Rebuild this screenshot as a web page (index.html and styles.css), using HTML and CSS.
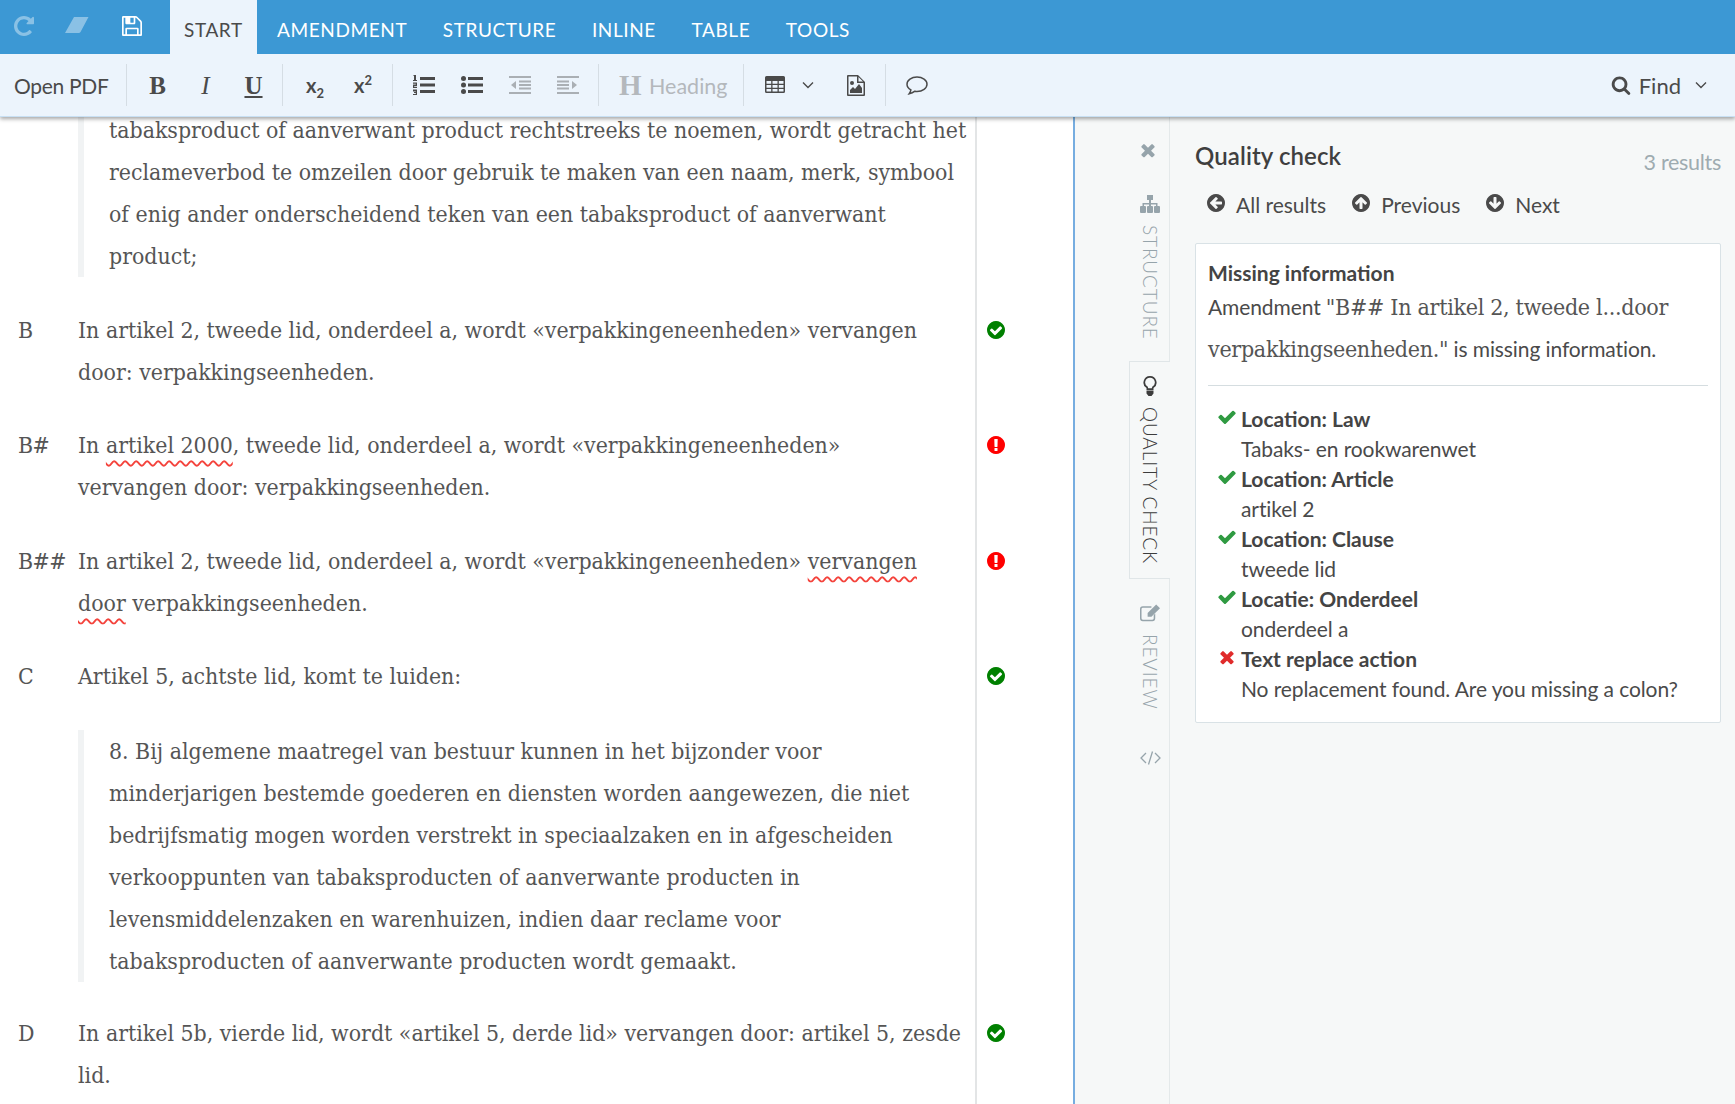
FILE: index.html
```html
<!DOCTYPE html>
<html>
<head>
    <meta name="viewport" content="width=device-width, initial-scale=1.0">
    <title>Amendment editor</title>
    <link rel="stylesheet" href="styles.css">
</head>
<body>
    <svg class="defs" width="0" height="0">
        <symbol id="i-check" viewBox="0 0 1792 1792"><path d="M1671 566q0 40-28 68l-724 724-136 136q-28 28-68 28t-68-28l-136-136-362-362q-28-28-28-68t28-68l136-136q28-28 68-28t68 28l294 295 656-657q28-28 68-28t68 28l136 136q28 28 28 68z"/></symbol>
        <symbol id="i-times" viewBox="0 0 1792 1792"><path d="M1490 1322q0 40-28 68l-136 136q-28 28-68 28t-68-28l-294-294-294 294q-28 28-68 28t-68-28l-136-136q-28-28-28-68t28-68l294-294-294-294q-28-28-28-68t28-68l136-136q28-28 68-28t68 28l294 294 294-294q28-28 68-28t68 28l136 136q28 28 28 68t-28 68l-294 294 294 294q28 28 28 68z"/></symbol>
        <symbol id="i-ok" viewBox="128 128 1536 1536"><path d="M1412 734q0-28-18-46l-91-90q-19-19-45-19t-45 19l-408 407-226-226q-19-19-45-19t-45 19l-91 90q-18 18-18 46 0 27 18 45l362 362q19 19 45 19 27 0 46-19l543-543q18-18 18-45zm252 162q0 209-103 385.5t-279.5 279.5-385.5 103-385.5-103-279.5-279.5-103-385.5 103-385.5 279.5-279.5 385.5-103 385.5 103 279.5 279.5 103 385.5z"/></symbol>
        <symbol id="i-error" viewBox="128 128 1536 1536"><path d="M896 128q209 0 385.5 103t279.5 279.5 103 385.5-103 385.5-279.5 279.5-385.5 103-385.5-103-279.5-279.5-103-385.5 103-385.5 279.5-279.5 385.5-103zm128 1247v-190q0-14-9-23.5t-22-9.5h-192q-13 0-23 10t-10 23v190q0 13 10 23t23 10h192q13 0 22-9.5t9-23.5zm-2-344l18-621q0-12-10-18-10-8-24-8h-220q-14 0-24 8-10 6-10 18l17 621q0 10 10 17.5t24 7.5h185q14 0 23.5-7.5t10.5-17.5z"/></symbol>
        <symbol id="i-search" viewBox="0 0 1792 1792"><path d="M1216 832q0-185-131.5-316.5t-316.5-131.5-316.5 131.5-131.5 316.5 131.5 316.5 316.5 131.5 316.5-131.5 131.5-316.5zm512 832q0 52-38 90t-90 38q-54 0-90-38l-343-342q-179 124-399 124-143 0-273.5-55.5t-225-150-150-225-55.5-273.5 55.5-273.5 150-225 225-150 273.5-55.5 273.5 55.5 225 150 150 225 55.5 273.5q0 220-124 399l343 343q37 37 37 90z"/></symbol>
        <symbol id="i-left" viewBox="128 128 1536 1536"><path d="M1408 960v-128q0-26-19-45t-45-19h-502l189-189q19-19 19-45t-19-45l-91-91q-18-18-45-18t-45 18l-362 362-91 91q-18 18-18 45t18 45l91 91 362 362q18 18 45 18t45-18l91-91q18-18 18-45t-18-45l-189-189h502q26 0 45-19t19-45zm256-64q0 209-103 385.5t-279.5 279.5-385.5 103-385.5-103-279.5-279.5-103-385.5 103-385.5 279.5-279.5 385.5-103 385.5 103 279.5 279.5 103 385.5z"/></symbol>
        <symbol id="i-save" viewBox="128 128 1536 1536"><path d="M512 1536h768v-384h-768v384zm896 0h128v-896q0-14-10-38.5t-20-34.5l-281-281q-10-10-34-20t-39-10v416q0 40-28 68t-68 28h-576q-40 0-68-28t-28-68v-416h-128v1280h128v-416q0-40 28-68t68-28h832q40 0 68 28t28 68v416zm-384-928v-320q0-13-9.5-22.5t-22.5-9.5h-192q-13 0-22.5 9.5t-9.5 22.5v320q0 13 9.5 22.5t22.5 9.5h192q13 0 22.5-9.5t9.5-22.5zm640 32v928q0 40-28 68t-68 28h-1344q-40 0-68-28t-28-68v-1344q0-40 28-68t68-28h928q40 0 88 20t76 48l280 280q28 28 48 76t20 88z"/></symbol>
        <symbol id="i-repeat" viewBox="128 128 1536 1536"><path d="M1664 256v448q0 26-19 45t-45 19h-448q-42 0-59-40-17-39 14-69l138-138q-148-137-349-137-104 0-198.5 40.5t-163.5 109.5-109.5 163.5-40.5 198.5 40.5 198.5 109.5 163.5 163.5 109.5 198.5 40.5q119 0 225-52t179-147q7-10 23-12 15 0 25 9l137 138q9 8 9.5 20.5t-7.5 22.5q-109 132-264 204.5t-327 72.5q-156 0-298-61t-245-164-164-245-61-298 61-298 164-245 245-164 298-61q147 0 284.5 55.5t244.5 156.5l130-129q29-31 70-14 39 17 39 59z"/></symbol>
        <symbol id="i-chevron" viewBox="0 0 12 8"><path d="M1 1.5l5 5 5-5" fill="none" stroke="currentColor" stroke-width="1.4"/></symbol>
    </svg>

    <div class="app">
        <header class="ribbon">
            <div class="tabbar">
                <div class="quick">
                    <svg class="ic ic-quick faded"><use href="#i-repeat"></use></svg>
                    <svg class="ic ic-eraser faded" viewBox="0 0 24 18"><path d="M9 0h14.500L15.500 15a2 2 0 0 1-1.800 1H0z"/></svg>
                    <svg class="ic ic-quick"><use href="#i-save"></use></svg>
                </div>
                <nav class="tabs">
                    <a class="tab active">START</a>
                    <a class="tab">AMENDMENT</a>
                    <a class="tab">STRUCTURE</a>
                    <a class="tab">INLINE</a>
                    <a class="tab">TABLE</a>
                    <a class="tab">TOOLS</a>
                </nav>
            </div>
            <div class="toolbar">
                <div class="group group-pdf"><span class="tool-text">Open PDF</span></div>
                <div class="group group-format">
                    <span class="glyph bold">B</span>
                    <span class="glyph italic">I</span>
                    <span class="glyph under">U</span>
                </div>
                <div class="group group-script">
                    <span class="script">x<sub>2</sub></span>
                    <span class="script">x<sup>2</sup></span>
                </div>
                <div class="group group-list">
                    <svg class="ic ic-tool" viewBox="0 0 22 20"><path d="M7 2h15v3H7zM7 8.500h15v3H7zM7 15h15v3H7z"/><path d="M1 0h2v5h1v1H0V5h1V1H0zM0 7.500h4v3.500H1.200v.8H4V13H0V9.500h2.800v-.8H0zM0 14.500h4V20H0v-1h2.800v-.9H1v-1h1.800v-.6H0z"/></svg>
                    <svg class="ic ic-tool" viewBox="0 0 22 20"><circle cx="2.500" cy="3.500" r="2.500"/><circle cx="2.500" cy="10" r="2.500"/><circle cx="2.500" cy="16.500" r="2.500"/><path d="M7 2h15v3H7zM7 8.500h15v3H7zM7 15h15v3H7z"/></svg>
                    <svg class="ic ic-tool faded-dark" viewBox="0 0 22 20"><path d="M0 1h22v2H0zM10 5.500h12v2H10zM10 9h12v2H10zM10 12.500h12v2H10zM0 17h22v2H0zM7 6v8l-5-4z"/></svg>
                    <svg class="ic ic-tool faded-dark" viewBox="0 0 22 20"><path d="M0 1h22v2H0zM0 5.500h12v2H0zM0 9h12v2H0zM0 12.500h12v2H0zM0 17h22v2H0zM15 6v8l5-4z"/></svg>
                </div>
                <div class="group group-heading">
                    <span class="glyph bold heading-h">H</span>
                    <span class="tool-text muted">Heading</span>
                </div>
                <div class="group group-insert">
                    <svg class="ic ic-table" viewBox="0 0 20 17"><path fill-rule="evenodd" d="M1.500 0h17A1.500 1.500 0 0 1 20 1.500v14a1.500 1.500 0 0 1-1.500 1.500h-17A1.500 1.500 0 0 1 0 15.500v-14A1.500 1.500 0 0 1 1.500 0zM1.500 5v2.700h4.700V5zm6 0v2.700h5V5zm6.300 0v2.700h4.700V5zM1.500 9v2.700h4.700V9zm6 0v2.700h5V9zm6.300 0v2.700h4.700V9zM1.500 13v2.500h4.700V13zm6 0v2.500h5V13zm6.300 0v2.500h4.700V13z"/></svg>
                    <svg class="ic ic-chevron"><use href="#i-chevron"></use></svg>
                    <svg class="ic ic-image" viewBox="0 0 18 21"><path fill-rule="evenodd" d="M1 0h10l7 7v13a1 1 0 0 1-1 1H1a1 1 0 0 1-1-1V1a1 1 0 0 1 1-1zm.5 1.500v18h15V8H10V1.500zM11.500 2v4.500H16z"/><circle cx="5" cy="8" r="2"/><path d="M3 18v-3l3-3 2 2 4-5 3 4v5z"/></svg>
                </div>
                <div class="group group-comment">
                    <svg class="ic ic-comment" viewBox="0 0 22 19"><path d="M11 1C5.500 1 1 4.200 1 8.200c0 2.300 1.500 4.400 3.900 5.700-.2 1.400-.8 2.700-1.700 3.900 2.200-.4 4.200-1.400 5.700-2.600.7.100 1.400.2 2.100.2 5.500 0 10-3.200 10-7.200S16.500 1 11 1z" fill="none" stroke="currentColor" stroke-width="1.500"/></svg>
                </div>
                <div class="find">
                    <svg class="ic ic-search"><use href="#i-search"></use></svg>
                    <span class="tool-text">Find</span>
                    <svg class="ic ic-chevron"><use href="#i-chevron"></use></svg>
                </div>
            </div>
        </header>

        <main class="workspace">
            <section class="editor">
                <div class="row row-first">
                    <div class="label"></div>
                    <div class="body">
                        <blockquote class="quote">tabaksproduct of aanverwant product rechtstreeks te noemen, wordt getracht het<br>reclameverbod te omzeilen door gebruik te maken van een naam, merk, symbool<br>of enig ander onderscheidend teken van een tabaksproduct of aanverwant<br>product;</blockquote>
                    </div>
                    <div class="gutter"></div>
                </div>
                <div class="row">
                    <div class="label">B</div>
                    <div class="body">In artikel 2, tweede lid, onderdeel a, wordt «verpakkingeneenheden» vervangen<br>door: verpakkingseenheden.</div>
                    <div class="gutter"><svg class="ic ic-mark ok"><use href="#i-ok"></use></svg></div>
                </div>
                <div class="row">
                    <div class="label">B#</div>
                    <div class="body">In <span class="wavy">artikel 2000</span>, tweede lid, onderdeel a, wordt «verpakkingeneenheden»<br>vervangen door: verpakkingseenheden.</div>
                    <div class="gutter"><svg class="ic ic-mark bad"><use href="#i-error"></use></svg></div>
                </div>
                <div class="row">
                    <div class="label">B##</div>
                    <div class="body">In artikel 2, tweede lid, onderdeel a, wordt «verpakkingeneenheden» <span class="wavy">vervangen</span><br><span class="wavy">door</span> verpakkingseenheden.</div>
                    <div class="gutter"><svg class="ic ic-mark bad"><use href="#i-error"></use></svg></div>
                </div>
                <div class="row">
                    <div class="label">C</div>
                    <div class="body">Artikel 5, achtste lid, komt te luiden:</div>
                    <div class="gutter"><svg class="ic ic-mark ok"><use href="#i-ok"></use></svg></div>
                </div>
                <div class="row row-quote">
                    <div class="label"></div>
                    <div class="body">
                        <blockquote class="quote">8. Bij algemene maatregel van bestuur kunnen in het bijzonder voor<br>minderjarigen bestemde goederen en diensten worden aangewezen, die niet<br>bedrijfsmatig mogen worden verstrekt in speciaalzaken en in afgescheiden<br>verkooppunten van tabaksproducten of aanverwante producten in<br>levensmiddelenzaken en warenhuizen, indien daar reclame voor<br>tabaksproducten of aanverwante producten wordt gemaakt.</blockquote>
                    </div>
                    <div class="gutter"></div>
                </div>
                <div class="row">
                    <div class="label">D</div>
                    <div class="body">In artikel 5b, vierde lid, wordt «artikel 5, derde lid» vervangen door: artikel 5, zesde<br>lid.</div>
                    <div class="gutter"><svg class="ic ic-mark ok"><use href="#i-ok"></use></svg></div>
                </div>
            </section>

            <aside class="sidebar">
                <div class="rail">
                    <svg class="ic ic-close"><use href="#i-times"></use></svg>
                    <div class="rail-tab">
                        <svg class="ic ic-rail" viewBox="0 0 20 18"><path d="M7 0h6v5h-2v3h6.500v3H19a1 1 0 0 1 1 1v5a1 1 0 0 1-1 1h-4a1 1 0 0 1-1-1v-5a1 1 0 0 1 1-1h1V9.500h-5V11h1a1 1 0 0 1 1 1v5a1 1 0 0 1-1 1H8a1 1 0 0 1-1-1v-5a1 1 0 0 1 1-1h1V9.500H4V11h1a1 1 0 0 1 1 1v5a1 1 0 0 1-1 1H1a1 1 0 0 1-1-1v-5a1 1 0 0 1 1-1h1.500V8H9V5H7z"/></svg>
                        <span class="rail-label">STRUCTURE</span>
                    </div>
                    <div class="rail-tab active">
                        <svg class="ic ic-rail" viewBox="-1 0 16 20"><path d="M7 0a6.500 6.500 0 0 1 3.500 12V14h-7v-2A6.500 6.500 0 0 1 7 0zm0 1.800a4.700 4.700 0 0 0-2.200 8.900l.4 1.500h3.600l.4-1.500A4.700 4.700 0 0 0 7 1.800zM3.500 14.500h7v3L8.500 20h-3l-2-2.500z"/></svg>
                        <span class="rail-label">QUALITY CHECK</span>
                    </div>
                    <div class="rail-tab">
                        <svg class="ic ic-rail" viewBox="0 0 21 18"><path d="M3 2h9v1.600H3a1.400 1.400 0 0 0-1.400 1.400v9.600A1.400 1.400 0 0 0 3 16h10a1.400 1.400 0 0 0 1.400-1.400V11L16 9.400v5.200a3 3 0 0 1-3 3H3a3 3 0 0 1-3-3V5a3 3 0 0 1 3-3z"/><path d="M17 0l4 4-9 9H8V9z"/></svg>
                        <span class="rail-label">REVIEW</span>
                    </div>
                    <svg class="ic ic-code" viewBox="0 0 21 14"><path d="M6 2L1 7l5 5M15 2l5 5-5 5M12.500 0.500l-4 13" fill="none" stroke="currentColor" stroke-width="1.300"/></svg>
                </div>

                <div class="panel">
                    <div class="panel-head">
                        <h2>Quality check</h2>
                        <span class="count">3 results</span>
                    </div>
                    <div class="panel-nav">
                        <a><svg class="ic ic-nav"><use href="#i-left"></use></svg>All results</a>
                        <a><svg class="ic ic-nav up"><use href="#i-left"></use></svg>Previous</a>
                        <a><svg class="ic ic-nav down"><use href="#i-left"></use></svg>Next</a>
                    </div>
                    <div class="card">
                        <h3>Missing information</h3>
                        <p class="summary">Amendment <span class="serif">"B## In artikel 2, tweede l...door<br>verpakkingseenheden."</span> is missing information.</p>
                        <ul class="checks">
                            <li><svg class="ic ic-check pass"><use href="#i-check"></use></svg><b>Location: Law</b><span>Tabaks- en rookwarenwet</span></li>
                            <li><svg class="ic ic-check pass"><use href="#i-check"></use></svg><b>Location: Article</b><span>artikel 2</span></li>
                            <li><svg class="ic ic-check pass"><use href="#i-check"></use></svg><b>Location: Clause</b><span>tweede lid</span></li>
                            <li><svg class="ic ic-check pass"><use href="#i-check"></use></svg><b>Locatie: Onderdeel</b><span>onderdeel a</span></li>
                            <li><svg class="ic ic-check fail"><use href="#i-times"></use></svg><b>Text replace action</b><span>No replacement found. Are you missing a colon?</span></li>
                        </ul>
                    </div>
                </div>
            </aside>
        </main>
    </div>
</body>
</html>
```
FILE: styles.css
```css
html, body {
    height: 100%;
    margin: 0;
}
body {
    font-family: Lato, "Open Sans", sans-serif;
    color: #4a4a4a;
    background: #fff;
    overflow: hidden;
}
.defs {
    display: block;
    height: 0;
}
.app {
    height: 100vh;
    display: flex;
    flex-direction: column;
    overflow: hidden;
}
.ic {
    display: block;
    fill: currentColor;
    flex: none;
}

/* ribbon */
.ribbon {
    position: relative;
    z-index: 2;
    flex: none;
    box-shadow: 0 2px 4px rgba(0, 0, 0, 0.35);
}
.tabbar {
    height: 54px;
    background: #3c98d4;
    display: flex;
}
.quick {
    width: 170px;
    display: flex;
    align-items: center;
    color: #fff;
    padding: 0 0 2px 14px;
    box-sizing: border-box;
    gap: 31px;
}
.ic-quick {
    width: 20px;
    height: 20px;
}
.ic-eraser {
    width: 24px;
    height: 18px;
    margin-right: 2px;
}
.faded {
    opacity: 0.4;
}
.tabs {
    display: flex;
}
.tab {
    color: #fff;
    font-size: 19px;
    letter-spacing: 0.6px;
    padding: 4px 17.800px 0;
    display: flex;
    align-items: center;
}
.tab.active {
    background: #ecf4fc;
    color: #4a4a4a;
    padding: 4px 14px 0;
    margin-right: 2.500px;
}
.toolbar {
    height: 63px;
    box-sizing: border-box;
    background: #ecf4fc;
    border-bottom: 1px solid #c8e0f4;
    display: flex;
    align-items: center;
    color: #4a4a4a;
}
.group {
    height: 42px;
    display: flex;
    align-items: center;
    border-right: 1px solid #d5dde4;
    box-sizing: border-box;
}
.tool-text {
    font-size: 22px;
}
.muted {
    color: #b4b8bc;
    font-size: 21.500px;
    padding-top: 1px;
}
.group-pdf {
    width: 127px;
    padding-left: 14px;
}
.group-pdf .tool-text {
    font-size: 21px;
    letter-spacing: -0.3px;
}
.group-format {
    width: 156px;
    padding-left: 20px;
    gap: 27px;
}
.glyph {
    font-family: "Liberation Serif", serif;
    font-size: 25px;
    width: 21px;
    text-align: center;
    line-height: 1;
}
.bold {
    font-weight: bold;
}
.italic {
    font-style: italic;
}
.under {
    text-decoration: underline;
    font-weight: bold;
}
.group-script {
    width: 110px;
    padding-left: 23px;
    gap: 22px;
}
.script {
    font-size: 20px;
    font-weight: bold;
    width: 26px;
    line-height: 1;
}
.script sub, .script sup {
    font-size: 13px;
    line-height: 0;
}
.group-list {
    width: 206px;
    padding-left: 20px;
    gap: 26px;
}
.ic-tool {
    width: 22px;
    height: 20px;
}
.faded-dark {
    opacity: 0.4;
}
.group-heading {
    width: 145px;
    padding-left: 20px;
    gap: 9px;
}
.heading-h {
    color: #b4b8bc;
    font-size: 29px;
}
.group-insert {
    width: 142px;
    padding-left: 21px;
}
.ic-table {
    width: 20px;
    height: 17px;
    margin-top: -2px;
}
.ic-chevron {
    width: 12px;
    height: 8px;
}
.group-insert .ic-chevron {
    margin: 0 0 0 17px;
}
.ic-image {
    width: 18px;
    height: 21px;
    margin-left: 33px;
}
.group-comment {
    border-right: none;
    padding-left: 20px;
}
.ic-comment {
    width: 22px;
    height: 19px;
}
.find {
    margin-left: auto;
    display: flex;
    align-items: center;
    padding-right: 28px;
}
.ic-search {
    width: 20px;
    height: 20px;
    margin-right: 8px;
}
.find .ic-chevron {
    margin-left: 14px;
}

/* document */
.workspace {
    flex: 1;
    min-height: 0;
    display: flex;
}
.editor {
    width: 1073px;
    flex: none;
    border-right: 2px solid #76ade0;
    font-family: "DejaVu Serif Condensed", "DejaVu Serif", serif;
    font-stretch: condensed;
    font-size: 22.850px;
    line-height: 42px;
    color: #555;
}
.row {
    display: grid;
    grid-template-columns: 60px 897px 1fr;
    padding-left: 18px;
}
.row-first {
    margin-top: -8px;
}
.label, .body {
    padding-bottom: 31.500px;
    white-space: nowrap;
}
.label {
    letter-spacing: -0.5px;
}
.row-quote .body {
    padding-bottom: 30px;
}
.quote {
    margin: 0;
    border-left: 6px solid #f1f3f4;
    padding-left: 25px;
}
.row-quote .quote {
    margin-top: 1.500px;
}
.gutter {
    border-left: 2px solid #e3e5e6;
    padding: 12px 0 0 10px;
}
.ic-mark {
    width: 18px;
    height: 18px;
}
.ok {
    color: #008000;
}
.bad {
    color: #f00;
}
.wavy {
    text-decoration: underline wavy #f4433c;
    text-decoration-thickness: 1.500px;
    text-underline-offset: 7px;
}

/* side panel */
.sidebar {
    flex: 1;
    min-width: 0;
    display: flex;
    background: #f6f8f8;
}
.rail {
    width: 95px;
    flex: none;
    box-sizing: border-box;
    border-right: 1px solid #e4e9ea;
    display: flex;
    flex-direction: column;
    align-items: flex-end;
    padding-top: 23px;
    color: #96a4ab;
}
.ic-close {
    width: 20px;
    height: 20px;
    margin-right: 11px;
}
.rail-tab {
    width: 41px;
    box-sizing: border-box;
    display: flex;
    flex-direction: column;
    align-items: center;
    margin-right: -1px;
    border: 1px solid transparent;
    border-right: none;
}
.rail-tab:nth-of-type(1) {
    margin-top: 33px;
    padding-bottom: 20px;
}
.rail-tab.active {
    border-color: #e0e6e8;
    background: #f6f8f8;
    color: #3c3c3c;
    padding: 14px 0 14px;
}
.rail-tab:last-of-type {
    padding-top: 23px;
}
.ic-rail {
    width: 20px;
    height: 20px;
    margin-bottom: 11px;
}
.rail-label {
    writing-mode: vertical-rl;
    font-size: 19px;
    font-weight: 300;
    letter-spacing: 0.9px;
    line-height: 20px;
}
.ic-code {
    width: 21px;
    height: 14px;
    margin: 41px 8px 0 0;
}
.panel {
    flex: 1;
    padding: 0 14px 0 25px;
    min-width: 0;
}
.panel-head {
    display: flex;
    justify-content: space-between;
    align-items: flex-start;
    padding-top: 24px;
}
.panel-head h2 {
    margin: 0;
    font-size: 24px;
    font-weight: 600;
    line-height: 30px;
    color: #3f3f3f;
    letter-spacing: 0.1px;
}
.count {
    color: #9eabb0;
    font-size: 21.500px;
    line-height: 30px;
    padding-top: 6px;
    letter-spacing: -0.3px;
}
.panel-nav {
    display: flex;
    padding: 14px 0 0 12px;
    font-size: 21px;
    height: 26px;
    align-items: center;
}
.panel-nav a {
    display: flex;
    align-items: center;
    margin-right: 26px;
}
.ic-nav {
    width: 18px;
    height: 18px;
    margin-right: 11px;
    margin-top: -3px;
}
.up {
    transform: rotate(90deg);
}
.down {
    transform: rotate(-90deg);
}
.card {
    margin-top: 26px;
    background: #fff;
    border: 1px solid #d9e2e6;
    border-radius: 2px;
    padding: 15px 12px 14px;
    height: 480px;
    box-sizing: border-box;
}
.card h3 {
    margin: 0;
    font-size: 21px;
    font-weight: bold;
    line-height: 27px;
    color: #444;
}
.summary {
    margin: 0;
    font-size: 21px;
    letter-spacing: -0.1px;
    line-height: 42px;
    padding-bottom: 15px;
    border-bottom: 1px solid #d5dde0;
}
.serif {
    font-family: "DejaVu Serif Condensed", "DejaVu Serif", serif;
    font-stretch: condensed;
    font-size: 23px;
    color: #555;
    letter-spacing: -0.3px;
}
.checks {
    list-style: none;
    margin: 0;
    padding: 18px 0 0 33px;
    font-size: 21px;
    letter-spacing: -0.1px;
    line-height: 30px;
}
.checks li {
    position: relative;
}
.checks b {
    display: block;
    font-weight: bold;
    letter-spacing: 0;
    color: #444;
}
.checks span {
    display: block;
}
.ic-check {
    position: absolute;
    left: -24px;
    top: 3px;
    width: 20px;
    height: 20px;
}
.pass {
    color: #2f9a41;
}
.fail {
    color: #e02b2b;
}
```
